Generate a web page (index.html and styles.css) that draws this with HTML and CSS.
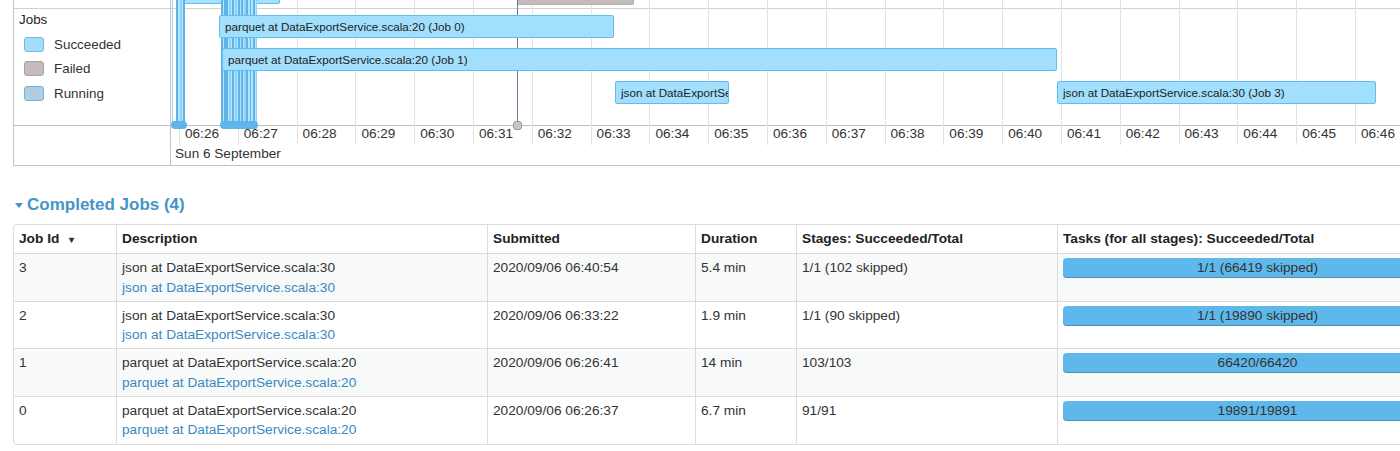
FILE: index.html
```html
<!DOCTYPE html>
<html lang="en">
<head>
<meta charset="utf-8">
<title>Spark Jobs</title>
<link rel="stylesheet" href="styles.css">
</head>
<body>
<div class="timeline">
  <div class="tl-labels">
    <div class="band-top"></div>
    <div class="band-jobs">
      <div class="group-name">Jobs</div>
      <ul class="legend">
        <li><span class="swatch succeeded"></span>Succeeded</li>
        <li><span class="swatch failed"></span>Failed</li>
        <li><span class="swatch running"></span>Running</li>
      </ul>
    </div>
    <div class="band-axis"></div>
  </div>
  <div class="tl-canvas">
    <div class="gridlines">
      <i></i><i></i><i></i><i></i><i></i><i></i><i></i><i></i><i></i><i></i><i></i>
      <i></i><i></i><i></i><i></i><i></i><i></i><i></i><i></i><i></i><i></i><i></i>
    </div>
    <div class="band-top"></div>
    <div class="band-jobs"></div>
    <div class="band-axis">
      <div class="ticks">
        <span>06:26</span><span>06:27</span><span>06:28</span><span>06:29</span><span>06:30</span>
        <span>06:31</span><span>06:32</span><span>06:33</span><span>06:34</span><span>06:35</span>
        <span>06:36</span><span>06:37</span><span>06:38</span><span>06:39</span><span>06:40</span>
        <span>06:41</span><span>06:42</span><span>06:43</span><span>06:44</span><span>06:45</span>
        <span>06:46</span>
      </div>
      <div class="date">Sun 6 September</div>
    </div>

    <div class="exec-box"></div>
    <div class="exec-failed"></div>

    <div class="vband band-a"></div>
    <div class="vband band-b"></div>

    <div class="vline light" style="--x:1"></div>
    <div class="vline dark wide" style="--x:5"></div>
    <div class="vline light wide" style="--x:9"></div>
    <div class="vline dark wide" style="--x:12"></div>

    <div class="vline dark wide" style="--x:50"></div>
    <div class="vline dark wide" style="--x:53"></div>
    <div class="vline dark wide" style="--x:55"></div>
    <div class="vline light wide" style="--x:58"></div>
    <div class="vline dark wide" style="--x:61"></div>
    <div class="vline light wide" style="--x:64"></div>
    <div class="vline dark wide" style="--x:67"></div>
    <div class="vline dark wide" style="--x:70"></div>
    <div class="vline light wide" style="--x:73"></div>
    <div class="vline dark wide" style="--x:75"></div>
    <div class="vline dark" style="--x:79"></div>
    <div class="vline dark wide" style="--x:82"></div>
    <div class="vline light" style="--x:85"></div>

    <div class="vline grey" style="--x:346"></div>

    <div class="dot blue dot-a"></div>
    <div class="dot blue dot-b"></div>
    <div class="dot grey dot-c"></div>

    <div class="job job0">parquet at DataExportService.scala:20 (Job 0)</div>
    <div class="job job1">parquet at DataExportService.scala:20 (Job 1)</div>
    <div class="job job2">json at DataExportService.scala:30 (Job 2)</div>
    <div class="job job3">json at DataExportService.scala:30 (Job 3)</div>
  </div>
</div>

<h4 class="section-title"><span class="arrow-open"></span>Completed Jobs (4)</h4>

<table class="jobs-table">
  <thead>
    <tr>
      <th class="c-id">Job Id <span class="sort">&#x25BE;</span></th>
      <th class="c-desc">Description</th>
      <th class="c-sub">Submitted</th>
      <th class="c-dur">Duration</th>
      <th class="c-stages">Stages: Succeeded/Total</th>
      <th class="c-tasks">Tasks (for all stages): Succeeded/Total</th>
    </tr>
  </thead>
  <tbody>
    <tr>
      <td>3</td>
      <td>json at DataExportService.scala:30<br><a class="name-link">json at DataExportService.scala:30</a></td>
      <td>2020/09/06 06:40:54</td>
      <td>5.4 min</td>
      <td>1/1 (102 skipped)</td>
      <td><div class="progress">1/1 (66419 skipped)</div></td>
    </tr>
    <tr>
      <td>2</td>
      <td>json at DataExportService.scala:30<br><a class="name-link">json at DataExportService.scala:30</a></td>
      <td>2020/09/06 06:33:22</td>
      <td>1.9 min</td>
      <td>1/1 (90 skipped)</td>
      <td><div class="progress">1/1 (19890 skipped)</div></td>
    </tr>
    <tr>
      <td>1</td>
      <td>parquet at DataExportService.scala:20<br><a class="name-link">parquet at DataExportService.scala:20</a></td>
      <td>2020/09/06 06:26:41</td>
      <td>14 min</td>
      <td>103/103</td>
      <td><div class="progress">66420/66420</div></td>
    </tr>
    <tr>
      <td>0</td>
      <td>parquet at DataExportService.scala:20<br><a class="name-link">parquet at DataExportService.scala:20</a></td>
      <td>2020/09/06 06:26:37</td>
      <td>6.7 min</td>
      <td>91/91</td>
      <td><div class="progress">19891/19891</div></td>
    </tr>
  </tbody>
</table>
</body>
</html>
```

FILE: styles.css
```css
html, body {
  margin: 0;
  padding: 0;
  overflow: hidden;
  background: #fff;
}
body {
  font-family: "Liberation Sans", Arial, sans-serif;
  color: #333;
  width: 1400px;
}

/* ---------- timeline ---------- */
.timeline {
  display: flex;
  margin-left: 13px;
  width: 1500px;
  border-left: 1px solid #c4c4c4;
  border-bottom: 1px solid #c4c4c4;
}
.tl-labels {
  width: 156px;
  flex: none;
  border-right: 1px solid #c4c4c4;
  display: flex;
  flex-direction: column;
}
.band-top {
  height: 8px;
  border-bottom: 1px solid #d2d2d2;
}
.band-jobs {
  height: 116px;
  border-bottom: 1px solid #bdbdbd;
}
.band-axis {
  height: 39px;
}
.group-name {
  padding: 3px 0 0 5px;
  font-size: 13.4px;
  line-height: 16px;
  color: #222;
}
.legend {
  list-style: none;
  margin: 4px 0 0;
  padding: 0 0 0 10px;
}
.legend li {
  display: flex;
  align-items: center;
  gap: 10px;
  height: 24.5px;
  font-size: 13.4px;
  color: #333;
}
.swatch {
  width: 20px;
  height: 15px;
  box-sizing: border-box;
  border-radius: 3px;
  flex: none;
}
.swatch.succeeded {
  background: #a5dcf7;
  border: 1px solid #6bbde9;
}
.swatch.failed {
  background: #c5bbbc;
  border: 1px solid #aaa0a1;
}
.swatch.running {
  background: repeating-linear-gradient(45deg, #bfc6cf 0 1px, #a6d3ec 1px 3px);
  border: 1px solid #6cb3da;
}

.tl-canvas {
  position: relative;
  flex: 1;
  display: flex;
  flex-direction: column;
}
.gridlines {
  position: absolute;
  left: 0;
  top: 0;
  height: 145px;
  display: flex;
  padding-left: 8px;
}
.gridlines i {
  flex: none;
  width: 58.8px;
  box-sizing: border-box;
  border-left: 1px solid #e3e3e3;
}
.ticks {
  display: flex;
  padding-left: 8px;
}
.ticks span {
  flex: none;
  width: 58.8px;
  box-sizing: border-box;
  padding-left: 6px;
  font-size: 13.6px;
  line-height: 16px;
  color: #333;
}
.date {
  margin-top: 4px;
  padding-left: 4px;
  font-size: 13.6px;
  line-height: 16px;
  color: #333;
}

/* items on the time canvas */
.exec-box {
  position: absolute;
  left: 6px;
  top: -12px;
  width: 103px;
  height: 16px;
  box-sizing: border-box;
  background: #a9e0fb;
  border: 1px solid #66bbea;
  border-radius: 2px;
}
.exec-failed {
  position: absolute;
  left: 346px;
  top: -12px;
  width: 117px;
  height: 17px;
  box-sizing: border-box;
  background: #c5babb;
  border: 1px solid #b9adae;
  border-radius: 2px;
}
.vband {
  position: absolute;
  top: 0;
  height: 124px;
  background: #b4e3fb;
}
.band-a { left: 5px; width: 9px; }
.band-b { left: 50px; width: 36px; }
.vline {
  position: absolute;
  top: 0;
  height: 124px;
  width: 1px;
  left: calc(var(--x) * 1px);
}
.vline.wide { width: 2px; }
.vline.light { background: #8fd2f5; }
.vline.dark { background: #5cb4e8; }
.vline.grey { background: #5f7b95; height: 122px; }

.dot {
  position: absolute;
  top: 121px;
  height: 8px;
  box-sizing: border-box;
  border-radius: 4px;
}
.dot.blue { background: #5db5e9; }
.dot.grey {
  background: #c8c8c8;
  border: 1px solid #9a9a9a;
  border-radius: 3px;
}
.dot-a { left: 0; width: 16px; }
.dot-b { left: 49px; width: 38px; }
.dot-c { left: 342px; width: 9px; height: 9px; }

.job {
  position: absolute;
  height: 23px;
  box-sizing: border-box;
  background: #a1dffc;
  border: 1px solid #62bcef;
  border-radius: 2px;
  padding-left: 5px;
  font-size: 11.7px;
  line-height: 21px;
  color: #222;
  white-space: nowrap;
  overflow: hidden;
}
.job0 { left: 48px; top: 15px; width: 395px; }
.job1 { left: 51px; top: 48px; width: 835px; }
.job2 { left: 444px; top: 81px; width: 114px; }
.job3 { left: 886px; top: 81px; width: 319px; }

/* ---------- section heading ---------- */
.section-title {
  display: flex;
  align-items: center;
  margin: 29px 0 0 15px;
  font-size: 17px;
  line-height: 20px;
  font-weight: bold;
  color: #4595c9;
}
.arrow-open {
  width: 0;
  height: 0;
  border-left: 4.5px solid transparent;
  border-right: 4.5px solid transparent;
  border-top: 5px solid #4595c9;
  margin-right: 4px;
  margin-top: 1px;
}

/* ---------- table ---------- */
.jobs-table {
  margin: 9px 0 0 13px;
  width: 1445px;
  table-layout: fixed;
  border-collapse: separate;
  border-spacing: 0;
  border: 1px solid #dcdcdc;
  border-radius: 4px;
  font-size: 13.7px;
  line-height: 19.3px;
}
.jobs-table th,
.jobs-table td {
  box-sizing: border-box;
  padding: 4px 5px;
  text-align: left;
  vertical-align: top;
  border-left: 1px solid #dcdcdc;
}
.jobs-table th:first-child,
.jobs-table td:first-child {
  border-left: 0;
}
.jobs-table td {
  border-top: 1px solid #dcdcdc;
}
.jobs-table th {
  font-weight: bold;
  color: #222;
}
.jobs-table tbody tr:nth-child(odd) td {
  background: #f8f9f9;
}
.jobs-table tbody tr:last-child td:first-child {
  border-bottom-left-radius: 4px;
}
.c-id { width: 102px; }
.c-desc { width: 371px; }
.c-sub { width: 208px; }
.c-dur { width: 101px; }
.c-stages { width: 261px; }
.c-tasks { width: 400px; }
.sort {
  font-size: 10px;
  margin-left: 6px;
  color: #333;
}
.name-link {
  color: #3a88c1;
  text-decoration: none;
}
.progress {
  height: 20px;
  line-height: 20px;
  text-align: center;
  background: #5fb8eb;
  border-radius: 4px;
  box-shadow: inset 0 -1px 0 rgba(0, 0, 0, 0.22);
  color: #333;
}
```
